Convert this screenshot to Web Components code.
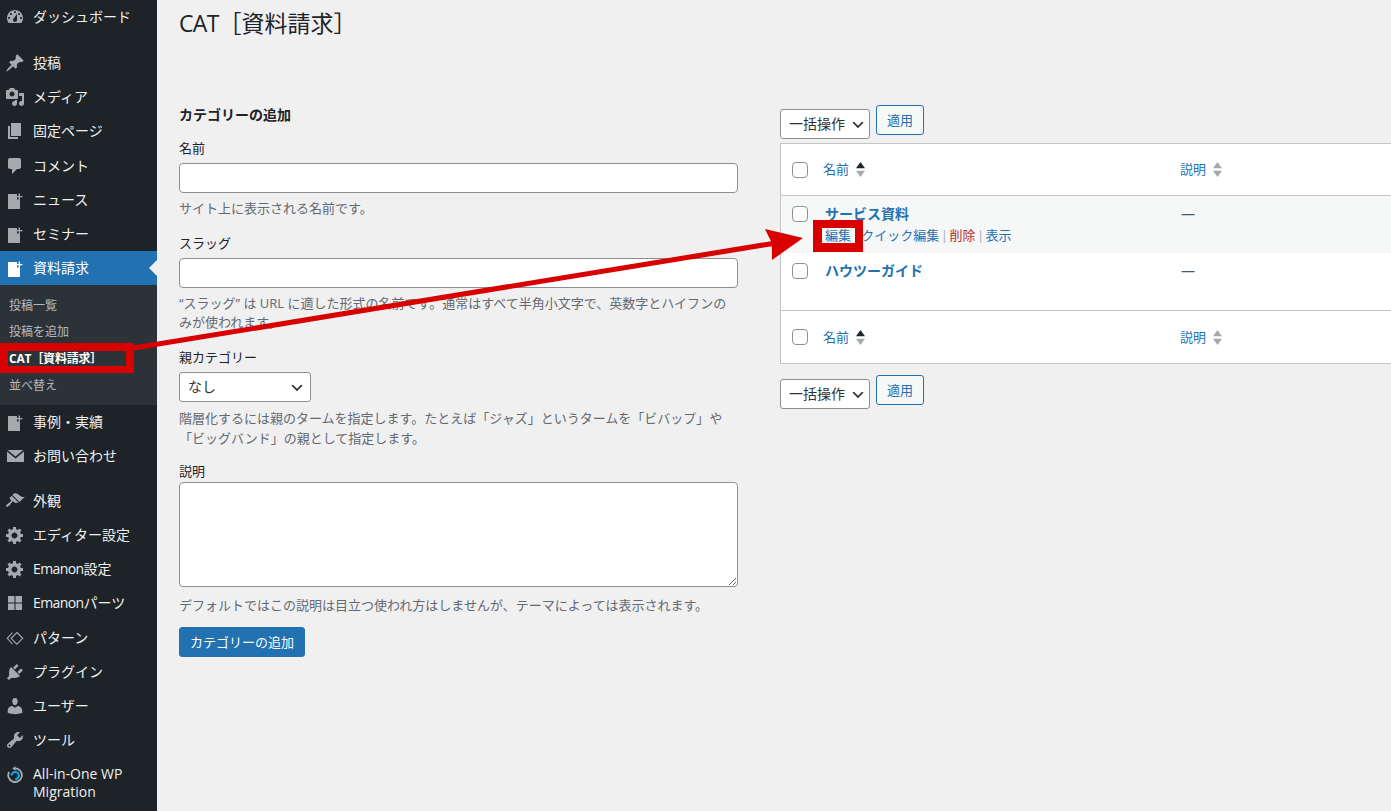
<!DOCTYPE html>
<html lang="ja">
<head>
<meta charset="utf-8">
<title>CAT［資料請求］</title>
<style>
html, body { margin: 0; padding: 0; height: 100%; overflow: hidden; background: #f0f0f1; }
body { font-family: "Open Sans", "Noto Sans CJK JP", sans-serif; color: #3c434a; }
</style>
</head>
<body>
<wp-admin-page>
    <wp-admin-menu slot="menu"></wp-admin-menu>
    <wp-page-title slot="main"><span style="letter-spacing:-.7px">CAT</span>［資料請求］</wp-page-title>
    <wp-term-form slot="left"></wp-term-form>
    <wp-terms-list slot="right"></wp-terms-list>
</wp-admin-page>
<screen-annotation></screen-annotation>

<script>
const FONT = '"Open Sans", "Noto Sans CJK JP", sans-serif';

const ICONS = {
    dashboard: '<path fill-rule="evenodd" d="M3.76 16h12.48c1.1-1.37 1.76-3.11 1.76-5 0-4.42-3.58-8-8-8s-8 3.58-8 8c0 1.89.66 3.63 1.76 5zM10 4c.55 0 1 .45 1 1s-.45 1-1 1-1-.45-1-1 .45-1 1-1zM6 6c.55 0 1 .45 1 1s-.45 1-1 1-1-.45-1-1 .45-1 1-1zm8 0c.55 0 1 .45 1 1s-.45 1-1 1-1-.45-1-1 .45-1 1-1zm-5.37 5.55L12 7v6c0 1.1-.9 2-2 2s-2-.9-2-2c0-.57.24-1.08.63-1.45zM4 10c.55 0 1 .45 1 1s-.45 1-1 1-1-.45-1-1 .45-1 1-1zm12 0c.55 0 1 .45 1 1s-.45 1-1 1-1-.45-1-1 .45-1 1-1z"/>',
    pin: '<path d="M10.44 3.02l1.82-1.82 6.36 6.35-1.83 1.82c-1.05-.68-2.48-.57-3.41.36l-.75.75c-.92.93-1.04 2.35-.35 3.41l-1.83 1.82-2.41-2.41-2.8 2.79c-.42.42-3.38 2.71-3.8 2.29s1.86-3.39 2.28-3.81l2.79-2.79L4.1 9.36l1.83-1.82c1.05.69 2.48.57 3.4-.36l.75-.75c.93-.92 1.05-2.35.36-3.41z"/>',
    media: '<path fill-rule="evenodd" d="M13 11V4c0-.55-.45-1-1-1h-1.67L9 1H5L3.67 3H2c-.55 0-1 .45-1 1v7c0 .55.45 1 1 1h10c.55 0 1-.45 1-1zM7 4.5c1.38 0 2.5 1.12 2.5 2.5S8.38 9.5 7 9.5 4.5 8.38 4.5 7 5.62 4.5 7 4.5zM14 6h5v10.5c0 1.38-1.12 2.5-2.5 2.5S14 17.88 14 16.5s1.12-2.5 2.5-2.5c.17 0 .34.02.5.05V9h-3V6zm-4 8.05V13h2v3.5c0 1.38-1.12 2.5-2.5 2.5S7 17.88 7 16.5 8.12 14 9.5 14c.17 0 .34.02.5.05z"/>',
    page: '<path d="M6 15V2h10v13H6zm-1 1h8v2H3V5h2v11z"/>',
    comment: '<path d="M5 2h9c1.1 0 2 .9 2 2v7c0 1.1-.9 2-2 2h-2l-5 5v-5H5c-1.1 0-2-.9-2-2V4c0-1.1.9-2 2-2z"/>',
    post: '<path d="M3 4h9v5.5h3V19H3z"/><path d="M13.6 3.4h1.4v2.5h2.5v1.4H15v2.5h-1.4V7.3h-2.5V5.9h2.5z"/>',
    mail: '<path d="M2.6 4h15.8l-7.9 6.4z"/><path d="M2 5.6l8.5 6.9L19 5.6V16H2z"/>',
    brush: '<path d="M14.48 11.06L7.41 3.99l1.5-1.5c.5-.56 2.3-.47 3.51.32 1.21.8 1.43 1.28 2.91 2.1 1.18.64 2.45 1.26 4.45.85zm-.71.71L6.7 4.7 4.93 6.47c-.39.39-.39 1.02 0 1.41l1.06 1.06c.39.39.39 1.03 0 1.42-.6.6-1.43 1.11-2.21 1.69-.35.26-.7.53-1.01.84C1.43 13.23.4 14.91 1.1 15.6c.7.7 2.38-.33 3.72-1.67.31-.31.58-.66.85-1.01.57-.78 1.08-1.61 1.68-2.21.39-.39 1.02-.39 1.41 0l1.06 1.06c.39.39 1.02.39 1.41 0z"/>',
    gear: '<path fill-rule="evenodd" d="M18 12h-2.18c-.17.7-.44 1.35-.81 1.93l1.54 1.54-2.1 2.1-1.54-1.54c-.58.36-1.23.63-1.91.79V19H8v-2.18c-.68-.16-1.33-.43-1.91-.79l-1.54 1.54-2.12-2.12 1.54-1.54c-.36-.58-.63-1.23-.79-1.91H1V9.03h2.17c.16-.7.44-1.35.8-1.94L2.43 5.55l2.1-2.1 1.54 1.54c.58-.37 1.24-.64 1.93-.81V2h3v2.18c.68.16 1.33.43 1.91.79l1.54-1.54 2.12 2.12-1.54 1.54c.36.59.64 1.24.8 1.94H18V12zm-8.5 1.5c1.66 0 3-1.34 3-3s-1.34-3-3-3-3 1.34-3 3 1.34 3 3 3z"/>',
    grid: '<path d="M3 3h6.5v6.5H3zM10.5 3H17v6.5h-6.5zM3 10.5h6.5V17H3zM10.5 10.5H17V17h-6.5z"/>',
    pattern: '<path d="M11.9 4.5l5.8 5.8-5.8 5.8-5.8-5.8zM7.5 4.5l-5.2 5.8 5.2 5.8" fill="none" stroke="currentColor" stroke-width="1.1"/>',
    plugin: '<path d="M13.11 4.36L9.87 7.6 8 5.73l3.24-3.24c.35-.34 1.05-.2 1.56.32.52.51.66 1.21.31 1.55zm-8 1.77l.91-1.12 9.01 9.01-1.19.84c-.71.71-2.63 1.16-3.82 1.16H6.14L4.9 17.26c-.59.59-1.54.59-2.12 0-.59-.58-.59-1.53 0-2.12l1.24-1.24v-3.88c0-1.13.4-3.19 1.09-3.89zm7.26 3.97l3.24-3.24c.34-.35 1.04-.21 1.55.31.52.51.66 1.21.31 1.55l-3.24 3.25z"/>',
    user: '<path d="M10 9.25c-2.27 0-2.73-3.44-2.73-3.44C7 4.02 7.82 2 9.97 2c2.16 0 2.98 2.02 2.71 3.81 0 0-.41 3.44-2.68 3.44zm0 2.57L12.72 10c2.39 0 4.52 2.33 4.52 4.53v2.49s-3.65 1.13-7.24 1.13c-3.65 0-7.24-1.13-7.24-1.13v-2.49c0-2.25 1.94-4.48 4.47-4.48z"/>',
    wrench: '<path fill-rule="evenodd" d="M16.68 9.77c-1.34 1.34-3.3 1.67-4.95.99l-5.41 6.52c-.99.99-2.59.99-3.58 0s-.99-2.59 0-3.57l6.52-5.42c-.68-1.65-.35-3.61.99-4.95 1.28-1.28 3.12-1.62 4.72-1.06l-2.89 2.89 2.82 2.82 2.86-2.87c.53 1.58.18 3.39-1.08 4.65zM3.81 16.21c.4.39 1.04.39 1.43 0 .4-.4.4-1.04 0-1.43-.39-.4-1.03-.4-1.43 0-.39.39-.39 1.03 0 1.43z"/>',
    migration: '<path d="M10.5 1.2L7.2 3.4l3.3 2.3V4.3a5.9 5.9 0 1 1-5.6 3.1L3.3 6.5a7.7 7.7 0 1 0 7.2-4z"/><path d="M6.6 10.6a3.6 3.6 0 1 1 3.6 3.6" fill="none" stroke="#00aaef" stroke-width="2.2"/>'
};

const CHEVRON = "data:image/svg+xml,%3Csvg xmlns='http://www.w3.org/2000/svg' width='20' height='20'%3E%3Cpath d='M5 6l5 5 5-5 2 1-7 7-7-7z' fill='%232c3338'/%3E%3C/svg%3E";

class WpAdminPage extends HTMLElement {
    constructor() {
        super();
        this.attachShadow({ mode: 'open' });
    }

    connectedCallback() {
        this.shadowRoot.innerHTML = `
            <style>
                :host {
                    display: flex;
                    width: 1391px;
                    height: 811px;
                    overflow: hidden;
                    background: #f0f0f1;
                }
                .main {
                    flex: 1;
                    min-width: 0;
                    padding-left: 22px;
                    overflow: hidden;
                }
                .columns {
                    display: grid;
                    grid-template-columns: 559px 613px;
                    column-gap: 42px;
                }
            </style>
            <slot name="menu"></slot>
            <div class="main">
                <slot name="main"></slot>
                <div class="columns">
                    <slot name="left"></slot>
                    <slot name="right"></slot>
                </div>
            </div>
        `;
    }
}

class WpPageTitle extends HTMLElement {
    constructor() {
        super();
        this.attachShadow({ mode: 'open' });
    }

    connectedCallback() {
        this.shadowRoot.innerHTML = `
            <style>
                :host {
                    display: block;
                    height: 105px;
                    box-sizing: border-box;
                    padding-top: 9px;
                    font-size: 23px;
                    line-height: 29px;
                    color: #1d2327;
                }
            </style>
            <slot></slot>
        `;
    }
}

class WpMenuItem extends HTMLElement {
    constructor() {
        super();
        this.attachShadow({ mode: 'open' });
    }

    connectedCallback() {
        const icon = ICONS[this.getAttribute('icon')] || '';
        this.shadowRoot.innerHTML = `
            <style>
                :host {
                    display: flex;
                    position: relative;
                    align-items: center;
                    height: 34.2px;
                    padding-left: 5px;
                    font-size: 14px;
                    line-height: 18px;
                    color: #f0f0f1;
                }
                :host([tall]) { height: 50px; align-items: flex-start; padding-top: 7.5px; box-sizing: border-box; }
                :host([current]) { background: #2271b1; color: #fff; }
                svg { width: 20px; height: 20px; flex: none; margin-right: 8px; fill: currentColor; color: #a7aaad; }
                :host([current]) svg { color: #fff; }
                :host([current])::after {
                    content: "";
                    position: absolute;
                    right: 0;
                    top: 50%;
                    margin-top: -8px;
                    border: 8px solid transparent;
                    border-right-color: #f0f0f1;
                    border-left-width: 0;
                }
            </style>
            <svg viewBox="0 0 20 20">${icon}</svg>
            <span><slot></slot></span>
        `;
    }
}

class WpSubmenu extends HTMLElement {
    constructor() {
        super();
        this.attachShadow({ mode: 'open' });
    }

    connectedCallback() {
        this.shadowRoot.innerHTML = `
            <style>
                :host {
                    display: flex;
                    flex-direction: column;
                    box-sizing: border-box;
                    height: 120px;
                    padding: 7.5px 0 6.5px 9px;
                    background: #2c3338;
                    font-size: 12px;
                    color: rgba(240, 246, 252, .7);
                }
                ::slotted(div) { height: 26.7px; line-height: 26.7px; }
            </style>
            <slot></slot>
        `;
    }
}

class WpAdminMenu extends HTMLElement {
    constructor() {
        super();
        this.attachShadow({ mode: 'open' });
    }

    connectedCallback() {
        this.shadowRoot.innerHTML = `
            <style>
                :host {
                    display: block;
                    flex: none;
                    width: 157px;
                    height: 811px;
                    background: #1d2327;
                }
                .sep { height: 11.7px; }
                .sep.short { height: 10.2px; }
                wp-submenu b { font-weight: 700; color: #fff; letter-spacing: -.2px; }
                .latin { letter-spacing: -.6px; }
            </style>
            <wp-menu-item icon="dashboard">ダッシュボード</wp-menu-item>
            <div class="sep"></div>
            <wp-menu-item icon="pin">投稿</wp-menu-item>
            <wp-menu-item icon="media">メディア</wp-menu-item>
            <wp-menu-item icon="page">固定ページ</wp-menu-item>
            <wp-menu-item icon="comment">コメント</wp-menu-item>
            <wp-menu-item icon="post">ニュース</wp-menu-item>
            <wp-menu-item icon="post">セミナー</wp-menu-item>
            <wp-menu-item icon="post" current>資料請求</wp-menu-item>
            <wp-submenu>
                <div>投稿一覧</div>
                <div>投稿を追加</div>
                <div><b>CAT［資料請求］</b></div>
                <div>並べ替え</div>
            </wp-submenu>
            <wp-menu-item icon="post">事例・実績</wp-menu-item>
            <wp-menu-item icon="mail">お問い合わせ</wp-menu-item>
            <div class="sep short"></div>
            <wp-menu-item icon="brush">外観</wp-menu-item>
            <wp-menu-item icon="gear">エディター設定</wp-menu-item>
            <wp-menu-item icon="gear"><span class="latin">Emanon</span>設定</wp-menu-item>
            <wp-menu-item icon="grid"><span class="latin">Emanon</span>パーツ</wp-menu-item>
            <wp-menu-item icon="pattern">パターン</wp-menu-item>
            <wp-menu-item icon="plugin">プラグイン</wp-menu-item>
            <wp-menu-item icon="user">ユーザー</wp-menu-item>
            <wp-menu-item icon="wrench">ツール</wp-menu-item>
            <wp-menu-item icon="migration" tall>All-in-One WP<br>Migration</wp-menu-item>
        `;
    }
}

class WpTermForm extends HTMLElement {
    constructor() {
        super();
        this.attachShadow({ mode: 'open' });
    }

    connectedCallback() {
        this.shadowRoot.innerHTML = `
            <style>
                :host {
                    display: block;
                    font-family: ${FONT};
                    font-size: 13px;
                    color: #3c434a;
                }
                h2 {
                    margin: 0 0 14px;
                    font-size: 14px;
                    line-height: 20px;
                    font-weight: 700;
                    color: #1d2327;
                }
                .field { margin-bottom: 16px; }
                label { display: block; line-height: 18px; margin-bottom: 6px; color: #1d2327; }
                label.tight { margin-bottom: 2px; }
                input, textarea {
                    display: block;
                    box-sizing: border-box;
                    width: 100%;
                    margin: 0;
                    background: #fff;
                    border: 1px solid #8c8f94;
                    border-radius: 4px;
                    font: inherit;
                }
                input { height: 30px; }
                textarea { height: 105px; }
                select {
                    display: block;
                    box-sizing: border-box;
                    width: 132px;
                    height: 30px;
                    padding: 0 24px 2px 8px;
                    background: #fff url("${CHEVRON}") no-repeat right 5px top 55%;
                    background-size: 16px 16px;
                    border: 1px solid #8c8f94;
                    border-radius: 3px;
                    font: inherit;
                    font-size: 14px;
                    color: #2c3338;
                    appearance: none;
                    -webkit-appearance: none;
                }
                p { margin: 6px 0 0; line-height: 19px; color: #646970; }
                p.wide { line-height: 20px; }
                p.last { margin-top: 9px; }
                button {
                    display: block;
                    height: 30px;
                    width: 126px;
                    margin-top: 12px;
                    padding: 0 0 2px;
                    background: #2271b1;
                    border: 1px solid #2271b1;
                    border-radius: 3px;
                    color: #fff;
                    font: inherit;
                }
            </style>
            <h2>カテゴリーの追加</h2>
            <div class="field">
                <label>名前</label>
                <input type="text">
                <p>サイト上に表示される名前です。</p>
            </div>
            <div class="field">
                <label>スラッグ</label>
                <input type="text">
                <p>“スラッグ” は URL に適した形式の名前です。通常はすべて半角小文字で、英数字とハイフンの<br>みが使われます。</p>
            </div>
            <div class="field" style="margin-bottom:14px">
                <label>親カテゴリー</label>
                <select><option>なし</option></select>
                <p class="wide">階層化するには親のタームを指定します。たとえば「ジャズ」というタームを「ビバップ」や<br>「ビッグバンド」の親として指定します。</p>
            </div>
            <div class="field" style="margin-bottom:0">
                <label class="tight">説明</label>
                <textarea></textarea>
                <p class="last">デフォルトではこの説明は目立つ使われ方はしませんが、テーマによっては表示されます。</p>
            </div>
            <button type="button">カテゴリーの追加</button>
        `;
    }
}

class WpBulkActions extends HTMLElement {
    constructor() {
        super();
        this.attachShadow({ mode: 'open' });
    }

    connectedCallback() {
        this.shadowRoot.innerHTML = `
            <style>
                :host {
                    display: flex;
                    align-items: flex-start;
                    gap: 6px;
                    font-family: ${FONT};
                }
                select {
                    box-sizing: border-box;
                    width: 90px;
                    height: 30px;
                    margin-top: 4px;
                    padding: 0 20px 2px 8px;
                    background: #fff url("${CHEVRON}") no-repeat right 3px top 55%;
                    background-size: 16px 16px;
                    border: 1px solid #8c8f94;
                    border-radius: 3px;
                    font: inherit;
                    font-size: 14px;
                    color: #2c3338;
                    appearance: none;
                    -webkit-appearance: none;
                }
                button {
                    box-sizing: border-box;
                    width: 48px;
                    height: 30px;
                    padding: 0 0 2px;
                    background: #f6f7f7;
                    border: 1px solid #2271b1;
                    border-radius: 3px;
                    color: #2271b1;
                    font: inherit;
                    font-size: 13px;
                }
            </style>
            <select><option>一括操作</option></select>
            <button type="button">適用</button>
        `;
    }
}

class WpSortLink extends HTMLElement {
    constructor() {
        super();
        this.attachShadow({ mode: 'open' });
    }

    connectedCallback() {
        const up = this.hasAttribute('sorted') ? '#1d2327' : '#a7aaad';
        this.shadowRoot.innerHTML = `
            <style>
                :host {
                    display: inline-flex;
                    align-items: center;
                    gap: 7px;
                    color: #2271b1;
                    font-size: 13px;
                }
                span { padding-bottom: 2px; }
                svg { width: 9px; height: 15px; }
            </style>
            <span><slot></slot></span>
            <svg viewBox="0 0 9 15">
                <path d="M4.5 0L9 6.2H0z" fill="${up}"/>
                <path d="M4.5 15L0 8.8h9z" fill="#a7aaad"/>
            </svg>
        `;
    }
}

class WpTermsList extends HTMLElement {
    constructor() {
        super();
        this.attachShadow({ mode: 'open' });
    }

    connectedCallback() {
        const headRow = (cls) => `
            <div class="row head ${cls}">
                <span class="check"><input type="checkbox"></span>
                <span class="cell"><wp-sort-link sorted>名前</wp-sort-link></span>
                <span class="cell"><wp-sort-link>説明</wp-sort-link></span>
            </div>`;
        this.shadowRoot.innerHTML = `
            <style>
                :host {
                    display: block;
                    font-family: ${FONT};
                    font-size: 13px;
                    color: #50575e;
                }
                .table {
                    margin: 4px 0 11px;
                    background: #fff;
                    border: 1px solid #c3c4c7;
                }
                .row {
                    display: grid;
                    grid-template-columns: 42px 357px 1fr;
                    box-sizing: border-box;
                }
                .head { height: 52px; align-items: center; }
                .head.top { border-bottom: 1px solid #c3c4c7; }
                .head.bottom { border-top: 1px solid #c3c4c7; height: 53px; }
                .body { height: 57px; }
                .body.hover { background: #f6f7f7; }
                .check { padding-left: 11px; display: flex; align-items: center; }
                .body .check { align-items: flex-start; padding-top: 10px; }
                .body .cell { padding-top: 8px; }
                input[type=checkbox] {
                    box-sizing: border-box;
                    width: 16px;
                    height: 16px;
                    margin: 0;
                    background: #fff;
                    border: 1px solid #8c8f94;
                    border-radius: 4px;
                    appearance: none;
                    -webkit-appearance: none;
                }
                .name {
                    display: block;
                    padding-left: 2px;
                    font-size: 14px;
                    font-weight: 700;
                    line-height: 20px;
                    color: #2271b1;
                }
                .actions {
                    display: flex;
                    padding: 1px 0 0 2px;
                    line-height: 20px;
                    color: #a7aaad;
                }
                .actions a { color: #2271b1; }
                .actions a.del { color: #b32d2e; }
                .actions i { width: 10.2px; text-align: center; font-style: normal; }
                .dash { padding-left: 1px; line-height: 20px; font-size: 14px; }
            </style>
            <wp-bulk-actions></wp-bulk-actions>
            <div class="table">
                ${headRow('top')}
                <div class="row body hover">
                    <span class="check"><input type="checkbox"></span>
                    <div class="cell">
                        <span class="name">サービス資料</span>
                        <div class="actions"><a>編集</a><i>|</i><a>クイック編集</a><i>|</i><a class="del">削除</a><i>|</i><a>表示</a></div>
                    </div>
                    <div class="cell dash">—</div>
                </div>
                <div class="row body">
                    <span class="check"><input type="checkbox"></span>
                    <div class="cell"><span class="name">ハウツーガイド</span></div>
                    <div class="cell dash">—</div>
                </div>
                ${headRow('bottom')}
            </div>
            <wp-bulk-actions></wp-bulk-actions>
        `;
    }
}

// 上に重ねる赤い注釈
class ScreenAnnotation extends HTMLElement {
    constructor() {
        super();
        this.attachShadow({ mode: 'open' });
    }

    connectedCallback() {
        this.shadowRoot.innerHTML = `
            <style>
                :host {
                    display: block;
                    position: absolute;
                    left: 0;
                    top: 0;
                    width: 1391px;
                    height: 811px;
                    pointer-events: none;
                }
                svg { display: block; }
            </style>
            <svg width="1391" height="811" viewBox="0 0 1391 811">
                <g fill="#d90000">
                    <path fill-rule="evenodd" d="M0 343H134V373H0ZM8 351V366H126V351Z"/>
                    <path fill-rule="evenodd" d="M813 220H863V252H813ZM822 228V243H855V228Z"/>
                    <path d="M133 345.5L771 241.2L765 229L803 238L772 260L771.8 246.2L134 350.5Z"/>
                </g>
            </svg>
        `;
    }
}

customElements.define('wp-menu-item', WpMenuItem);
customElements.define('wp-submenu', WpSubmenu);
customElements.define('wp-admin-menu', WpAdminMenu);
customElements.define('wp-page-title', WpPageTitle);
customElements.define('wp-term-form', WpTermForm);
customElements.define('wp-bulk-actions', WpBulkActions);
customElements.define('wp-sort-link', WpSortLink);
customElements.define('wp-terms-list', WpTermsList);
customElements.define('wp-admin-page', WpAdminPage);
customElements.define('screen-annotation', ScreenAnnotation);
</script>
</body>
</html>
